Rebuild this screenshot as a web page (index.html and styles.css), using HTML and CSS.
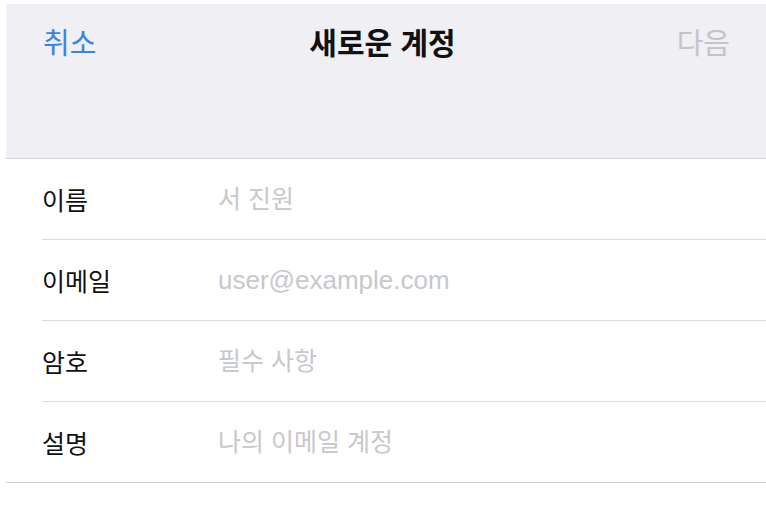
FILE: index.html
```html
<!DOCTYPE html>
<html lang="ko">
<head>
    <meta charset="UTF-8">
    <meta name="viewport" content="width=device-width, initial-scale=1.0">
    <title>새로운 계정</title>
    <link rel="stylesheet" href="styles.css">
</head>
<body>
    <div class="screen">
        <div class="nav-bar">
            <button type="button" class="nav-btn cancel">취소</button>
            <h1 class="nav-title">새로운 계정</h1>
            <button type="button" class="nav-btn next" disabled>다음</button>
        </div>

        <form class="account-form">
            <div class="form-row">
                <label for="name">이름</label>
                <input type="text" id="name" placeholder="서 진원">
            </div>
            <div class="form-row">
                <label for="email">이메일</label>
                <input type="email" id="email" class="latin" placeholder="user@example.com">
            </div>
            <div class="form-row">
                <label for="password">암호</label>
                <input type="password" id="password" placeholder="필수 사항">
            </div>
            <div class="form-row">
                <label for="desc">설명</label>
                <input type="text" id="desc" placeholder="나의 이메일 계정">
            </div>
        </form>
    </div>
</body>
</html>
```

FILE: styles.css
```css
body {
    margin: 0;
    background-color: white;
    font-family: "Liberation Sans", "Noto Sans CJK KR", sans-serif;
}
.screen {
    padding: 4px 0 0 6px;
}
.nav-bar {
    display: flex;
    align-items: flex-start;
    justify-content: space-between;
    box-sizing: border-box;
    height: 155px;
    padding: 20px 36px 0 37px;
    background-color: #efeff4;
    border-bottom: 1px solid #d6d6da;
}
.nav-btn {
    background: none;
    border: none;
    padding: 0;
    margin: 0;
    font-family: inherit;
    font-size: 29px;
    line-height: 40px;
    cursor: pointer;
}
.cancel {
    color: #3a82e6;
}
.next {
    color: #c4c4c8;
}
.nav-title {
    margin: 0 0 0 -8px;
    font-size: 30px;
    line-height: 40px;
    font-weight: bold;
    color: #111;
}
.account-form {
    border-bottom: 1px solid #cfcfd3;
}
.form-row {
    display: flex;
    align-items: center;
    height: 80px;
    margin-left: 36px;
    border-bottom: 1px solid #dcdcdf;
}
.form-row:last-child {
    border-bottom: none;
}
.form-row label {
    width: 176px;
    font-size: 25px;
    color: #111;
}
.form-row input {
    flex: 1;
    border: none;
    outline: none;
    padding: 0;
    font-family: inherit;
    font-size: 25px;
    color: #111;
    background: none;
}
.form-row input.latin {
    font-size: 26px;
}
.form-row input::placeholder {
    color: #c7c7cc;
}
```
